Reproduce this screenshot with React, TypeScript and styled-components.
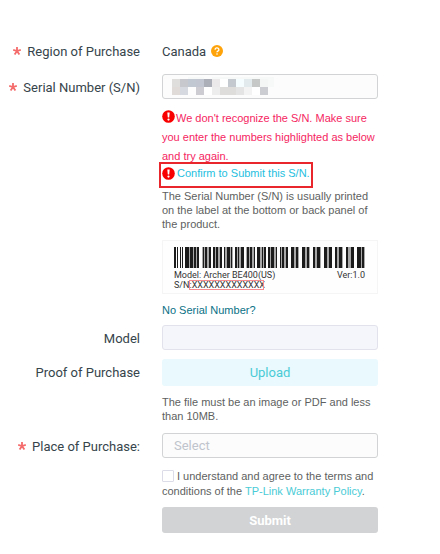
import React from "react";
import styled, { createGlobalStyle } from "styled-components";

const GlobalStyle = createGlobalStyle`
  *, *::before, *::after { box-sizing: border-box; }
  body {
    margin: 0;
    background: #fff;
    color: #36444b;
    font-family: "Liberation Sans", Arial, sans-serif;
    font-size: 13px;
  }
`;

const Form = styled.form`
  display: flex;
  flex-direction: column;
  padding: 38px 62px 20px 0;
`;

const Row = styled.div<{ $gap?: number }>`
  display: grid;
  grid-template-columns: 140px minmax(0, 1fr);
  column-gap: 22px;
  margin-bottom: ${(p) => p.$gap ?? 10}px;
`;

const Label = styled.label`
  display: flex;
  justify-content: flex-end;
  align-items: center;
  gap: 6px;
  height: 26px;
  font-family: Roboto, sans-serif;
  white-space: nowrap;
`;

const Field = styled.div`
  display: flex;
  flex-direction: column;
`;

const Region = styled.output`
  display: flex;
  align-items: center;
  gap: 5px;
  height: 26px;
  font-family: Roboto, sans-serif;
`;

const InputWrap = styled.div`
  position: relative;
`;

const Input = styled.input`
  display: block;
  width: 100%;
  height: 25px;
  padding: 0 11px;
  border: 1px solid #d1d3d4;
  border-radius: 3px;
  background: #fcfcfc;
  font: inherit;

  &:disabled {
    border-color: #e1e2ec;
    background: #f5f6fb;
  }
`;

const Mosaic = styled.svg`
  position: absolute;
  top: 3px;
  left: 10px;
`;

const Select = styled.select`
  appearance: none;
  width: 100%;
  height: 25px;
  padding: 0 11px;
  border: 1px solid #d1d3d4;
  border-radius: 3px;
  background: #fcfcfc;
  color: #c0c4cc;
  font: 13px Roboto, sans-serif;
`;

const ErrorText = styled.p`
  margin: 10px 0 0;
  color: #f5255f;
  font-size: 11px;
  line-height: 19px;

  svg { vertical-align: -1px; margin-right: 1px; }
`;

const Confirm = styled.div`
  display: flex;
  align-items: center;
  align-self: flex-start;
  gap: 2px;
  height: 26px;
  margin: -4px 0 0 -3px;
  padding: 0 1px 4px;
  border: 2px solid #e9262c;
`;

const Link = styled.a<{ $tone?: string }>`
  color: ${(p) => p.$tone ?? "#4acbd6"};
  font-size: 11px;
  text-decoration: none;
`;

const Note = styled.p<{ $top: number }>`
  margin: ${(p) => p.$top}px 0 0;
  color: #5e5f61;
  font-size: 11px;
  line-height: 14px;
`;

const Picture = styled.svg`
  display: block;
  width: 100%;
  margin: 9px 0 10px;
`;

const Upload = styled.button`
  height: 27px;
  border: 0;
  border-radius: 3px;
  background: #e9f9fd;
  color: #4acbd6;
  font: 13px Roboto, sans-serif;
`;

const Agreement = styled.label`
  color: #5e5f61;
  font-size: 11px;
  line-height: 15px;
`;

const Checkbox = styled.input`
  appearance: none;
  width: 12px;
  height: 12px;
  margin: 0 3px 0 0;
  border: 1px solid #dcdce8;
  border-radius: 1px;
  background: #fff;
  vertical-align: -2px;
`;

const Submit = styled.button`
  height: 26px;
  margin-top: 8px;
  border: 0;
  border-radius: 3px;
  background: #d1d3d4;
  color: #fff;
  font: bold 13px Roboto, sans-serif;
`;

const Star = () => (
  <svg width="8" height="8" viewBox="0 0 8 8" stroke="#f56c6c" strokeWidth="1.8" aria-hidden="true">
    <path d="M4 0v4M4 4L.2 2.8M4 4l3.8-1.2M4 4L1.6 7.5M4 4l2.4 3.5" />
  </svg>
);

const Alert = () => (
  <svg width="13" height="13" viewBox="0 0 13 13" aria-hidden="true">
    <circle cx="6.5" cy="6.5" r="6.3" fill="#f80000" />
    <path d="M5.3 2.4h2.4l-.5 5H5.8z" fill="#fff" />
    <circle cx="6.5" cy="9.6" r="1.1" fill="#fff" />
  </svg>
);

const Help = () => (
  <svg width="12" height="12" viewBox="0 0 12 12" role="img" aria-label="Help">
    <circle cx="6" cy="6" r="6" fill="#ffa30a" />
    <path d="M4.1 4.7a1.9 1.7 0 1 1 2.8 1.4c-.7.4-.9.6-.9 1.2" fill="none" stroke="#fff" strokeWidth="1.3" />
    <circle cx="6" cy="9" r=".8" fill="#fff" />
  </svg>
);

const mosaicTop = ["#e0dedd", "#c6c8ce", "#c2c8d2", "#c2c6d0", "#acaeb8", "#ebe9e9", "#ffffff", "#c4c8cf", "#f5fdff", "#e2eaed", "#c6c8c8", "#f4f5f5"];
const mosaicBottom = ["#e0dad8", "#d6d9df", "#fdfdfd", "#ccccd2", "#ffffff", "#ededee", "#dedddb", "#dedddb", "#e4e4e4", "#f4f3f3", "#ffffff", "#cccdd2"];

const barGroups: [number, number][] = [
  [23, 14], [40, 9], [51, 9], [62, 9], [73, 9], [84, 9], [95, 9], [106, 9],
  [118, 8], [129, 8], [140, 8], [151, 8], [162, 8], [173, 8], [184, 8], [195, 8],
];

const bars: [number, number][] = [
  [12, 2], [15, 1], [18, 1], [20, 1], [23, 4], [28, 3], [32, 2], [35, 2],
  [41, 1], [43, 2], [47, 2], [51, 2], [54, 2], [58, 2],
  [62, 1], [65, 3], [69, 1], [73, 2], [76, 1], [79, 3],
  [85, 2], [88, 2], [92, 1], [95, 3], [100, 1], [102, 2],
  [106, 2], [109, 3], [114, 1], [118, 1], [120, 2], [124, 2],
  [129, 3], [134, 2], [140, 3], [145, 2],
  [151, 2], [155, 3], [162, 3], [167, 3],
  [173, 2], [177, 3], [184, 2], [189, 3],
  [195, 4], [200, 2],
];

const LabelPicture = () => (
  <Picture viewBox="0 0 216 54" role="img" aria-label="Product label with the serial number highlighted">
    <rect x=".5" y=".5" width="215" height="53" fill="#fefefe" stroke="#f5f5f5" />
    {barGroups.map(([x, w]) => (
      <rect key={x} x={x} y="7" width={w} height="21" fill="#a8a8a8" />
    ))}
    {bars.map(([x, w]) => (
      <rect key={x} x={x} y="7" width={w} height="21" fill="#1c1c1c" />
    ))}
    <g fill="#333" fontFamily="Roboto, sans-serif" fontSize="9">
      <text x="12" y="38">Model: Archer BE400(US)</text>
      <text x="175" y="38">Ver:1.0</text>
      <text x="12" y="48">S/N:XXXXXXXXXXXXX</text>
    </g>
    <rect x="27.5" y="40.5" width="74" height="9" fill="none" stroke="#f58a8f" />
  </Picture>
);

export default function App() {
  return (
    <>
      <GlobalStyle />
      <Form onSubmit={(e) => e.preventDefault()}>
        <Row>
          <Label htmlFor="region"><Star />Region of Purchase</Label>
          <Region id="region">Canada <Help /></Region>
        </Row>
        <Row $gap={9}>
          <Label htmlFor="serial"><Star />Serial Number (S/N)</Label>
          <Field>
            <InputWrap>
              <Input id="serial" type="text" />
              <Mosaic width="102" height="18" shapeRendering="crispEdges" aria-hidden="true">
                <path d="M16 0h16v2H16zM40 0h62v10H40z" fill="#f7f8f8" />
                {mosaicTop.map((c, i) => <rect key={i} x={i * 8} y="2" width="8" height="8" fill={c} />)}
                {mosaicBottom.map((c, i) => <rect key={i} x={i * 8} y="10" width="8" height="8" fill={c} />)}
              </Mosaic>
            </InputWrap>
            <ErrorText role="alert">
              <Alert />We don't recognize the S/N. Make sure you enter the numbers highlighted as below and try again.
            </ErrorText>
            <Confirm><Alert /><Link href="#confirm" $tone="#25c0e0">Confirm to Submit this S/N.</Link></Confirm>
            <Note $top={1}>The Serial Number (S/N) is usually printed on the label at the bottom or back panel of the product.</Note>
            <LabelPicture />
            <Link href="#no-serial" $tone="#0a7186">No Serial Number?</Link>
          </Field>
        </Row>
        <Row $gap={8}>
          <Label htmlFor="model">Model</Label>
          <Input id="model" type="text" disabled />
        </Row>
        <Row>
          <Label htmlFor="proof">Proof of Purchase</Label>
          <Field>
            <Upload id="proof" type="button">Upload</Upload>
            <Note $top={9}>The file must be an image or PDF and less than 10MB.</Note>
          </Field>
        </Row>
        <Row>
          <Label htmlFor="place"><Star />Place of Purchase:</Label>
          <Select id="place" defaultValue=""><option value="">Select</option></Select>
        </Row>
        <Row>
          <span />
          <Field>
            <Agreement>
              <Checkbox type="checkbox" />I understand and agree to the terms and conditions of the <Link href="#policy">TP-Link Warranty Policy</Link>.
            </Agreement>
            <Submit type="submit" disabled>Submit</Submit>
          </Field>
        </Row>
      </Form>
    </>
  );
}
